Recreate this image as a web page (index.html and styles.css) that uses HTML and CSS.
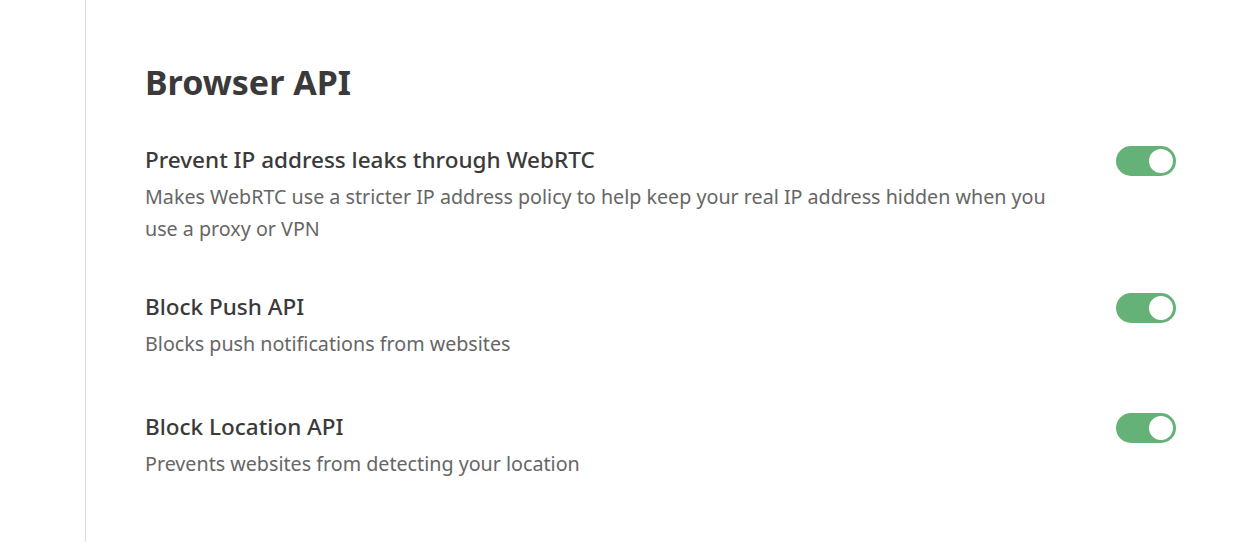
FILE: index.html
```html
<!DOCTYPE html>
<html>
<head>
<meta charset="utf-8">
<link rel="stylesheet" href="styles.css">
</head>
<body>
<div class="layout">
  <aside class="sidebar"></aside>
  <main class="content">
    <h1 class="heading">Browser API</h1>
    <div class="row">
      <div class="text">
        <div class="title">Prevent IP address leaks through WebRTC</div>
        <div class="desc">Makes WebRTC use a stricter IP address policy to help keep your real IP address hidden when you use a proxy or VPN</div>
      </div>
      <span class="toggle"><span class="knob"></span></span>
    </div>
    <div class="row">
      <div class="text">
        <div class="title">Block Push API</div>
        <div class="desc">Blocks push notifications from websites</div>
      </div>
      <span class="toggle"><span class="knob"></span></span>
    </div>
    <div class="row">
      <div class="text">
        <div class="title">Block Location API</div>
        <div class="desc">Prevents websites from detecting your location</div>
      </div>
      <span class="toggle"><span class="knob"></span></span>
    </div>
  </main>
</div>
</body>
</html>
```
FILE: styles.css
```css
html, body {
  margin: 0;
  padding: 0;
  background: #ffffff;
  font-family: "Noto Sans", "Open Sans", sans-serif;
}
.layout {
  display: flex;
  height: 542px;
}
.sidebar {
  width: 85px;
  flex: none;
  border-right: 1px solid #dcdcdc;
}
.content {
  flex: 1;
  padding: 56px 60px 0 59px;
}
.heading {
  margin: 0 0 35px;
  font-size: 34px;
  line-height: 52px;
  font-weight: 700;
  color: #3a3a3a;
}
.row {
  display: flex;
  justify-content: space-between;
  align-items: flex-start;
  box-sizing: border-box;
  min-height: 120px;
  padding-bottom: 45px;
}
.text {
  max-width: 920px;
}
.title {
  font-size: 22.5px;
  line-height: 34px;
  font-weight: 500;
  color: #3a3a3a;
  margin-bottom: 4px;
}
.desc {
  font-size: 19.7px;
  line-height: 32px;
  color: #666666;
}
.toggle {
  flex: none;
  width: 60px;
  height: 30px;
  border-radius: 15px;
  background: #65b278;
  display: flex;
  align-items: center;
  justify-content: flex-end;
  padding: 0 3px;
  box-sizing: border-box;
  margin-top: 3px;
}
.knob {
  width: 24px;
  height: 24px;
  border-radius: 50%;
  background: #ffffff;
}
```
